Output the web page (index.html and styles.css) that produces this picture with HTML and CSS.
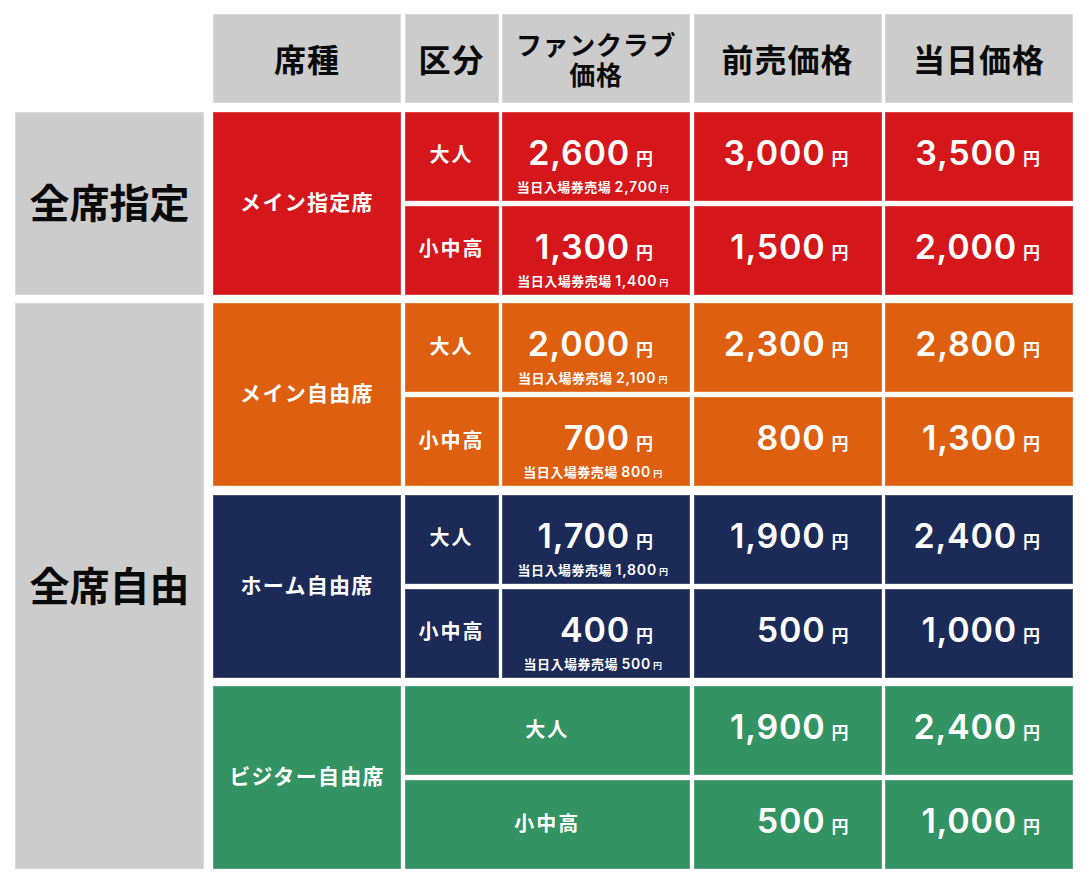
FILE: index.html
```html
<!DOCTYPE html>
<html lang="ja">
<head>
<meta charset="utf-8">
<title>料金表</title>
<link rel="stylesheet" href="styles.css">
</head>
<body>
<div class="board">
  <div class="zones">
    <div class="zone zone-reserved">全席指定</div>
    <div class="zone zone-free">全席自由</div>
  </div>
  <div class="main">
    <div class="head">
      <div class="hcell">席種</div>
      <div class="hcell">区分</div>
      <div class="hcell hcell-fc"><span class="hline">ファンクラブ</span><span class="hline">価格</span></div>
      <div class="hcell">前売価格</div>
      <div class="hcell">当日価格</div>
    </div>

    <div class="group red">
      <div class="cell seat">メイン指定席</div>
      <div class="cell cat">大人</div>
      <div class="cell price fc"><span class="amt">2,600<small>円</small></span><span class="note">当日入場券売場 <b>2,700</b><small>円</small></span></div>
      <div class="cell price"><span class="amt">3,000<small>円</small></span></div>
      <div class="cell price"><span class="amt">3,500<small>円</small></span></div>
      <div class="cell cat">小中高</div>
      <div class="cell price fc"><span class="amt">1,300<small>円</small></span><span class="note">当日入場券売場 <b>1,400</b><small>円</small></span></div>
      <div class="cell price"><span class="amt">1,500<small>円</small></span></div>
      <div class="cell price"><span class="amt">2,000<small>円</small></span></div>
    </div>

    <div class="group orange">
      <div class="cell seat">メイン自由席</div>
      <div class="cell cat">大人</div>
      <div class="cell price fc"><span class="amt">2,000<small>円</small></span><span class="note">当日入場券売場 <b>2,100</b><small>円</small></span></div>
      <div class="cell price"><span class="amt">2,300<small>円</small></span></div>
      <div class="cell price"><span class="amt">2,800<small>円</small></span></div>
      <div class="cell cat">小中高</div>
      <div class="cell price fc"><span class="amt">700<small>円</small></span><span class="note">当日入場券売場 <b>800</b><small>円</small></span></div>
      <div class="cell price"><span class="amt">800<small>円</small></span></div>
      <div class="cell price"><span class="amt">1,300<small>円</small></span></div>
    </div>

    <div class="group navy">
      <div class="cell seat">ホーム自由席</div>
      <div class="cell cat">大人</div>
      <div class="cell price fc"><span class="amt">1,700<small>円</small></span><span class="note">当日入場券売場 <b>1,800</b><small>円</small></span></div>
      <div class="cell price"><span class="amt">1,900<small>円</small></span></div>
      <div class="cell price"><span class="amt">2,400<small>円</small></span></div>
      <div class="cell cat">小中高</div>
      <div class="cell price fc"><span class="amt">400<small>円</small></span><span class="note">当日入場券売場 <b>500</b><small>円</small></span></div>
      <div class="cell price"><span class="amt">500<small>円</small></span></div>
      <div class="cell price"><span class="amt">1,000<small>円</small></span></div>
    </div>

    <div class="group green">
      <div class="cell seat">ビジター自由席</div>
      <div class="cell cat wide">大人</div>
      <div class="cell price"><span class="amt">1,900<small>円</small></span></div>
      <div class="cell price"><span class="amt">2,400<small>円</small></span></div>
      <div class="cell cat wide">小中高</div>
      <div class="cell price"><span class="amt">500<small>円</small></span></div>
      <div class="cell price"><span class="amt">1,000<small>円</small></span></div>
    </div>
  </div>
</div>
</body>
</html>
```

FILE: styles.css
```css
* { box-sizing: border-box; }

body {
  margin: 0;
  background: #ffffff;
  font-family: "Noto Sans CJK JP", "Noto Sans", sans-serif;
}

.board {
  display: flex;
  gap: 9px;
  padding: 14px 0 0 15px;
}

.zones {
  width: 189px;
  display: flex;
  flex-direction: column;
  gap: 8.5px;
  padding-top: 97.5px;
}

.zone {
  background: #cccccc;
  box-shadow: inset 0 0 0 1px #d9d9d9;
  display: flex;
  align-items: center;
  justify-content: center;
  font-size: 40px;
  font-weight: 700;
  color: #0a0a0a;
  padding-bottom: 5px;
}

.zone-reserved { height: 183px; }
.zone-free { height: 566px; }

.main {
  display: flex;
  flex-direction: column;
  gap: 8.5px;
}

.head,
.group {
  display: grid;
  grid-template-columns: 188px 94px 188px 188px 188px;
  column-gap: 3.5px;
}

.head { height: 89px; }

.hcell {
  background: #cccccc;
  box-shadow: inset 0 0 0 1px #d9d9d9;
  display: flex;
  align-items: center;
  justify-content: center;
  text-align: center;
  font-size: 32px;
  letter-spacing: 1px;
  font-weight: 700;
  color: #0a0a0a;
  padding-bottom: 2px;
}

.hcell-fc {
  flex-direction: column;
  font-size: 26px;
  letter-spacing: 0.7px;
  padding-bottom: 0;
}

.hline {
  display: block;
  line-height: 30px;
  height: 30px;
}

.group {
  grid-template-rows: 89px 89px;
  row-gap: 5px;
}

.cell {
  color: #ffffff;
  font-weight: 700;
  box-shadow: inset 0 0 0 1px rgba(255, 255, 255, 0.18);
}

.red .cell { background: #d5161a; }
.orange .cell { background: #dd5f0f; }
.navy .cell { background: #1c2a58; }
.green .cell { background: #339363; }

.seat,
.cat {
  display: flex;
  align-items: center;
  justify-content: center;
  padding-bottom: 5px;
}

.seat {
  grid-row: span 2;
  font-size: 21px;
  letter-spacing: 1.3px;
}

.cat {
  font-size: 20px;
  letter-spacing: 2px;
}

.wide { grid-column: span 2; }

.price {
  display: flex;
  flex-direction: column;
  align-items: center;
  padding-top: 21px;
}

.amt {
  align-self: flex-end;
  margin-right: 33px;
  font-family: "Inter", "Noto Sans", sans-serif;
  font-weight: 600;
  font-size: 34px;
  line-height: 40px;
  letter-spacing: 0.8px;
}

.fc .amt { margin-right: 37px; }

.amt small {
  font-family: "Noto Sans CJK JP", sans-serif;
  font-weight: 700;
  font-size: 17px;
  letter-spacing: 0;
  margin-left: 6px;
}

.note {
  margin-top: 1px;
  margin-right: 6px;
  font-size: 13px;
  line-height: 16px;
  letter-spacing: 0.5px;
  white-space: nowrap;
}

.note b {
  font-family: "Inter", "Noto Sans", sans-serif;
  font-weight: 600;
  font-size: 14px;
  letter-spacing: 0.8px;
}

.note small {
  font-size: 9px;
  margin-left: 2px;
}
```
